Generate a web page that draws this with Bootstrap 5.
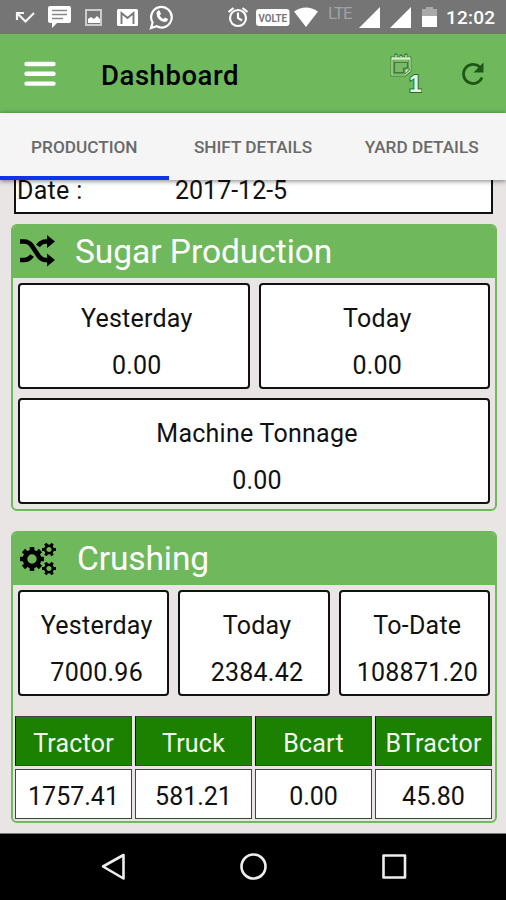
<!DOCTYPE html>
<html lang="en">
<head>
<meta charset="utf-8">
<meta name="viewport" content="width=device-width, initial-scale=1">
<title>Dashboard</title>
<link href="https://cdn.jsdelivr.net/npm/bootstrap@5.3.0/dist/css/bootstrap.min.css" rel="stylesheet">
<style>
body{font-family:Roboto,"Liberation Sans",sans-serif;background:#e8e5e4;color:#111;height:900px;overflow:hidden}
svg{display:block;flex:none}
.phone{width:506px;height:900px}
.status{height:34px;background:#757575;color:#fff;padding-left:15px}
.status .sp{margin-left:auto}
.g4{margin-left:4px}.g6{margin-left:7px}.g9{margin-left:9px}.g10{margin-left:10px}.g12{margin-left:12px}.g14{margin-left:14px}.g39{margin-left:39px}
.lte{font-size:17px;line-height:12px;color:#a2a2a2;width:25px;margin:0 6px 8px 9px;letter-spacing:-1px}
.clock{font-size:19px;font-weight:500;width:50px;margin-left:9px;margin-right:10px;line-height:34px;padding-top:2px;letter-spacing:.2px;white-space:nowrap}
.appbar{height:79px;background:#6fb85c;padding:0 21px 0 24px}
.apptitle{font-size:27.5px;font-weight:500;color:#000;line-height:79px;margin-left:45px;padding-top:4px;letter-spacing:.55px}
.tabs{height:67px;background:#f5f5f5;box-shadow:0 1px 5px rgba(0,0,0,.5);z-index:2}
.tabs a{flex:1 1 0;color:#6a6a6a;font-size:17.2px;font-weight:500;line-height:69px;text-decoration:none;text-align:center;white-space:nowrap;border-bottom:4px solid transparent;height:67px}
.tabs a.active{border-color:#1035e8}
.daterow{height:34px;margin:0 13px 0 14px;border:2px solid #111;border-top:0;background:#fff;font-size:25px;line-height:22px;padding-left:1px}
.daterow .k{width:158px;letter-spacing:.3px}
.panel{width:486px;margin-left:11px;border:2px solid #6fb85c;border-radius:6px;overflow:hidden}
.panel-sugar{height:287px;margin-top:10px}
.panel-crush{height:292px;margin-top:20px}
.panel-top{height:52px;background:#6fb85c;color:#fff;font-size:33.5px;line-height:52px;padding-left:7px}
.ttl-sugar{margin-left:19px;letter-spacing:-.04px}
.ttl-crush{margin-left:20px;letter-spacing:-.1px}
.tiles{gap:9px;padding:5px 5px 0 5px}
.tiles-next{padding-top:9px}
.tile{height:106px;border:2px solid #111;border-radius:4px;background:#fff;font-size:25px;line-height:47px;text-align:center;padding:10px 0 0 6px;flex:1 1 0;letter-spacing:.25px}
.types{display:grid;grid-template-columns:repeat(4,1fr);gap:3px;padding:20px 3px 0 2px;font-size:25px;text-align:center}
.types div{height:50px;border:1px solid #444;line-height:53px;background:#fff;white-space:nowrap}
.types .hd{background:#1c8000;color:#f2fff0;border-left:1px solid #111;line-height:54px;letter-spacing:.2px}
.navkeys{height:67px;background:#000;margin-top:10px;border-top:1px solid #777}
</style>
</head>
<body>
<main class="phone d-flex flex-column">
  <div class="status d-flex align-items-center">
    <svg width="21" height="34" fill="none" stroke="#f4f4f4" stroke-width="2.2"><path d="M2 20V13h7M2.500 13.500l8 8L19 13"/></svg>
    <svg class="g12" width="25" height="34"><path fill="#fff" d="M2 6h19q2 0 2 2v13q0 2-2 2H9l-5 5v-5H2q-2 0-2-2V8q0-2 2-2z"/><path stroke="#888" stroke-width="1.600" d="M4 10.500h15M4 14.500h15M4 18.500h11"/></svg>
    <svg class="g12" width="18" height="34"><rect x="1" y="10" width="15" height="15" fill="#777" stroke="#ccc" stroke-width="2"/><path fill="#fff" d="M3 23v-4l3-2 3 2 3-3 3 3v4z"/></svg>
    <svg class="g14" width="22" height="34"><rect y="9" width="21" height="17" rx="1.500" fill="#fff"/><path d="M4.500 24V13l6 5 6-5v11" fill="none" stroke="#777" stroke-width="1.900"/></svg>
    <svg class="g10" width="25" height="34"><path d="M2 28l1.600-5.500a10.300 10.300 0 1 1 4 3.800z" fill="none" stroke="#fff" stroke-width="2.200"/><path fill="#fff" d="M8.500 11q1.500-1.500 2.500.5l1 2.500-1.300 1.500q1.300 2.600 3.800 3.500l1.500-1.500 3 1.500q-.5 3-3.500 3Q8 20.500 7.500 13.500q0-1.500 1-2.500z"/></svg>
    <svg class="sp" width="22" height="34" fill="none" stroke="#fff" stroke-width="2.200"><circle cx="11" cy="18" r="8"/><path d="M11 12.500V18l4 2.500M1.500 12l5-4M20.500 12l-5-4"/></svg>
    <svg class="g6" width="34" height="34"><rect y="9" width="33.500" height="17" rx="3" fill="#fff"/><text x="2.500" y="22" textLength="28.500" lengthAdjust="spacingAndGlyphs" font-family="Roboto,sans-serif" font-size="11" font-weight="700" fill="#777">VOLTE</text></svg>
    <svg class="g4" width="25" height="34"><path fill="#fff" d="M12 27L0 11.500q12-8 24 0z"/></svg>
    <div class="lte">LTE</div>
    <svg width="22" height="34"><path fill="#fff" d="M21 7v21H0z"/></svg>
    <svg class="g9" width="22" height="34"><path fill="#fff" d="M21 7v21H0z"/></svg>
    <svg class="g10" width="15" height="34"><path fill="#aaa" d="M4 7h7v2h4v9H0V9h4z"/><path fill="#fff" d="M0 16h15v11H0z"/></svg>
    <div class="clock">12:02</div>
  </div>

  <header class="appbar d-flex align-items-center">
    <svg width="32" height="79"><path d="M2.500 30h27M2.500 39.800h27M2.500 49.600h27" stroke="#fff" stroke-width="4.400" stroke-linecap="round"/></svg>
    <div class="apptitle">Dashboard</div>
    <svg class="ms-auto" width="32" height="79"><path d="M2 24h18v13l-5 4H2z" fill="#79b969" stroke="#3f7e32" stroke-width="2.800"/><path d="M2 24h18v13l-5 4H2z" fill="none" stroke="#cdebc4" stroke-width="1.200"/><path d="M2 24.500h18" stroke="#d8f0d0" stroke-width="2.400"/><path d="M4.500 28.500h13v5l-4 1v4h-9z" fill="none" stroke="#3f7e32" stroke-width="1.200"/><path d="M6 23.500v-4M11 23.500v-3M16 23.500v-4" stroke="#3f7e32" stroke-width="3"/><path d="M6 24v-3M11 24v-2M16 24v-3" stroke="#cdebc4" stroke-width="1.300"/><path d="M20 35l-5 5v-5z" fill="#cdebc4" stroke="#3f7e32" stroke-width=".8"/><text x="19" y="58" font-family="'Liberation Sans',sans-serif" font-size="23" font-weight="700" fill="#e2f6dc" stroke="#2f6a26" stroke-width="2" paint-order="stroke">1</text></svg>
    <svg class="g39" width="24" height="79"><path d="M21 43.500a9.600 9.600 0 1 1-2.200-10.500" fill="none" stroke="#1d5716" stroke-width="2.700"/><path fill="#1d5716" d="M22.500 28.500v10h-10z"/></svg>
  </header>

  <nav class="tabs d-flex position-relative">
    <a class="active" href="#">PRODUCTION</a>
    <a href="#">SHIFT DETAILS</a>
    <a href="#">YARD DETAILS</a>
  </nav>

  <div class="daterow d-flex"><div class="k">Date :</div><div>2017-12-5</div></div>

  <section class="panel panel-sugar">
    <div class="panel-top d-flex">
      <svg width="36" height="50" fill="none" stroke="#000" stroke-width="4.600"><path d="M0 15.500h4q5 0 8 4.500l6 9q3 5 8 5h3M0 34h4q5 0 8-4.500M18 20q3-4.500 8-4.500h3"/><path d="M27 9l8 6.500-8 6.500zM27 27.500l8 6.500-8 6.500z" fill="#000" stroke="none"/></svg>
      <span class="ttl-sugar">Sugar Production</span>
    </div>
    <div class="tiles d-flex">
      <div class="tile"><div>Yesterday</div><div>0.00</div></div>
      <div class="tile"><div>Today</div><div>0.00</div></div>
    </div>
    <div class="tiles tiles-next d-flex">
      <div class="tile"><div>Machine Tonnage</div><div>0.00</div></div>
    </div>
  </section>

  <section class="panel panel-crush">
    <div class="panel-top d-flex">
      <svg width="37" height="50" fill="none" stroke="#000">
        <defs>
          <g id="gear"><circle r="7" stroke-width="4.600"/><path stroke-width="4.600" d="M0-12v4M0 12v-4M12 0h-4M-12 0h4M8.500-8.500l-3 3M-8.500 8.500l3-3M8.500 8.500l-3-3M-8.500-8.500l3 3"/></g>
          <g id="smallgear"><circle r="3.800" stroke-width="2.400"/><path stroke-width="3" d="M3.500-6l-1.300 2.200M-3.500 6l1.300-2.200M3.500 6l-1.300-2.200M-3.500-6l1.300 2.200M7 0H4.500M-7 0h2.500"/></g>
        </defs>
        <use href="#gear" x="12" y="26"/><use href="#smallgear" x="29" y="16.500"/><use href="#smallgear" x="29" y="35.500"/>
      </svg>
      <span class="ttl-crush">Crushing</span>
    </div>
    <div class="tiles d-flex">
      <div class="tile"><div>Yesterday</div><div>7000.96</div></div>
      <div class="tile"><div>Today</div><div>2384.42</div></div>
      <div class="tile"><div>To-Date</div><div>108871.20</div></div>
    </div>
    <div class="types">
      <div class="hd">Tractor</div><div class="hd">Truck</div><div class="hd">Bcart</div><div class="hd">BTractor</div>
      <div>1757.41</div><div>581.21</div><div>0.00</div><div>45.80</div>
    </div>
  </section>

  <footer class="navkeys d-flex align-items-center">
    <svg width="506" height="66" fill="none" stroke="#eee" stroke-width="2.600" stroke-linejoin="round"><path d="M103 32.500l20.500-11.500v23.500z"/><circle cx="253.500" cy="32.500" r="12"/><rect x="383.500" y="21.500" width="21.500" height="22"/></svg>
  </footer>
</main>
<script src="https://cdn.jsdelivr.net/npm/bootstrap@5.3.0/dist/js/bootstrap.bundle.min.js"></script>
</body>
</html>
